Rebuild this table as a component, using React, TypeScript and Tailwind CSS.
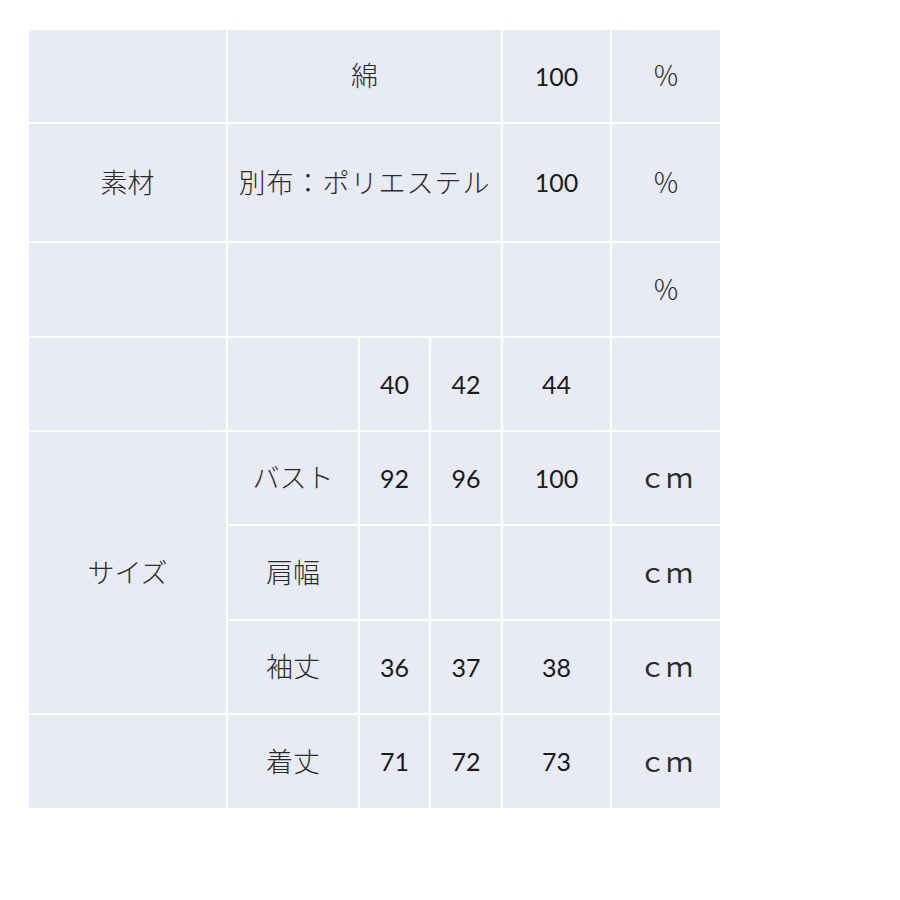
import * as React from 'react'

const jp = "font-['Noto_Sans_CJK_JP',sans-serif] font-light text-[27px] text-[#2a2a2a] pb-[3px]"
const num = "font-['Lato','Noto_Sans_CJK_JP',sans-serif] text-[25px] text-[#1a1a1a]"

function Cell({
  children,
  className = '',
  font = jp,
}: {
  children?: React.ReactNode
  className?: string
  font?: string
}) {
  return (
    <div className={`flex items-center justify-center bg-[#e8ebf4] leading-none ${font} ${className}`}>
      {children}
    </div>
  )
}

const sizes = [
  { label: 'バスト', v: ['92', '96', '100'], unit: 'ｃｍ' },
  { label: '肩幅', v: ['', '', ''], unit: 'ｃｍ' },
  { label: '袖丈', v: ['36', '37', '38'], unit: 'ｃｍ' },
  { label: '着丈', v: ['71', '72', '73'], unit: 'ｃｍ' },
]

export default function App() {
  return (
    <div className="min-h-[900px] w-[900px] bg-white pl-[29px] pt-[30px]">
      <div className="grid w-[691px] grid-cols-[197px_130px_69px_70px_107px_108px] grid-rows-[92px_117px_93px_92px_92px_93px_92px_93px] gap-[2px] bg-white">
        {/* 素材 */}
        <Cell />
        <Cell className="col-span-3">綿</Cell>
        <Cell font={num}>100</Cell>
        <Cell>％</Cell>

        <Cell>素材</Cell>
        <Cell className="col-span-3 tracking-[1px]">別布：ポリエステル</Cell>
        <Cell font={num}>100</Cell>
        <Cell>％</Cell>

        <Cell />
        <Cell className="col-span-3" />
        <Cell />
        <Cell>％</Cell>

        {/* サイズ */}
        <Cell />
        <Cell />
        <Cell font={num}>40</Cell>
        <Cell font={num}>42</Cell>
        <Cell font={num}>44</Cell>
        <Cell />

        <Cell className="row-span-3">サイズ</Cell>
        {sizes.slice(0, 3).map((r) => (
          <React.Fragment key={r.label}>
            <Cell>{r.label}</Cell>
            {r.v.map((x, i) => (
              <Cell key={i} font={num}>{x}</Cell>
            ))}
            <Cell className="text-[26px] font-normal">{r.unit}</Cell>
          </React.Fragment>
        ))}

        <Cell />
        <Cell>{sizes[3].label}</Cell>
        {sizes[3].v.map((x, i) => (
          <Cell key={i} font={num}>{x}</Cell>
        ))}
        <Cell className="text-[26px] font-normal">{sizes[3].unit}</Cell>
      </div>
    </div>
  )
}
